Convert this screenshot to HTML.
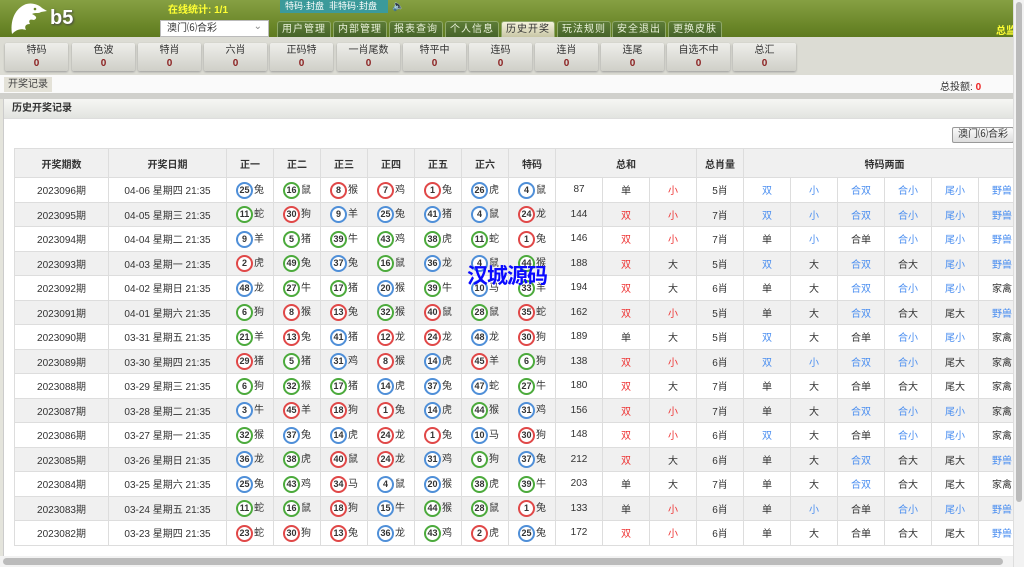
<!DOCTYPE html>
<html><head><meta charset="utf-8">
<style>
*{box-sizing:border-box;margin:0;padding:0}
body{width:1024px;height:567px;overflow:hidden;background:#e4e4dc;font-family:"Liberation Sans","Noto Sans CJK SC",sans-serif;font-size:11px;color:#333;position:relative}
#hd{position:absolute;left:0;top:0;width:1024px;height:37px;background:linear-gradient(#86a043,#6a8628 70%,#5e7a20)}
.logo{position:absolute;left:8px;top:2px}
.b5{position:absolute;left:50px;top:7px;color:#fff;font:bold 20px "Liberation Sans",sans-serif;text-shadow:1px 1px 2px #444}
.online{position:absolute;left:168px;top:1px;color:#ff3;font-weight:bold;font-size:10px}
.teal{position:absolute;left:280px;top:0;width:108px;height:13px;background:#3b9a9a;color:#fff;font-size:9px;line-height:13px;padding-left:5px;white-space:nowrap;overflow:hidden}
.spk{position:absolute;left:392px;top:1px;color:#fff;font-size:10px}
.sel{position:absolute;left:160px;top:20px;width:109px;height:17px;background:#fff;border:1px solid #bbb;font-size:10px;line-height:15px;padding-left:6px}
.sel:after{content:"⌄";position:absolute;right:6px;top:-2px;color:#888}
.tab{position:absolute;top:21px;height:16px;width:54px;background:linear-gradient(#5d7c36,#46632a);border:1px solid #8fa86a;border-bottom:none;border-radius:3px 3px 0 0;color:#e8f0d8;text-align:center;line-height:15px;font-size:10px;letter-spacing:1px}
.tab.on{background:linear-gradient(#f4f2dc,#c9c7a6);color:#333}
.zj{position:absolute;left:996px;top:22px;color:#ff3;font-weight:bold;font-size:10px}
#stat{position:absolute;top:37px;left:0;width:1024px;height:38px;background:#dcdcd4}
.sb{position:absolute;top:6px;width:63px;height:28px;background:linear-gradient(#eeeeea,#cfcfc8);border-radius:2px;box-shadow:0 1px 2px #999;text-align:center;font-size:10px;line-height:13px;padding-top:1px}
.sb b{display:block;color:#8b2020;font-size:10px}
#strip{position:absolute;top:75px;left:0;width:1013px;height:18px;background:#fafafa}
.tag{position:absolute;left:4px;top:2px;height:15px;background:#e4e2d8;padding:0 4px;font-size:10px;line-height:15px;color:#444}
.tot{position:absolute;left:940px;top:3px;font-size:10px}
.tot b{color:#e22}
#gap{position:absolute;top:93px;left:0;width:1013px;height:6px;background:#d0d0cc}
#panel{position:absolute;top:99px;left:3px;width:1010px;height:460px;background:#fff;border-left:1px solid #ccc;overflow:hidden}
.ph{height:20px;background:linear-gradient(#f6f6f4,#e2e4e0);border-bottom:1px solid #ddd;padding-left:8px;line-height:20px;font-weight:bold;font-size:10px}
.pbtn{position:absolute;left:948px;top:28px;width:62px;height:16px;background:linear-gradient(#fafafa,#ddd);border:1px solid #999;border-radius:2px;font-size:10px;line-height:14px;text-align:center}
table{position:absolute;left:10px;top:49px;border-collapse:collapse;table-layout:fixed;width:1011px}
td,th{border:1px solid #ddd;text-align:center;height:24.5px;font-size:10px;white-space:nowrap;overflow:hidden;padding:0}
th{height:29px;background:#f0f0f0;font-weight:bold}
tr:nth-child(odd) td{background:#f0f0f0}
.r{color:#e33}.b{color:#4a8ef0}
i{display:inline-block;width:17px;height:17px;border-radius:50%;border:2.5px solid;font-style:normal;font-weight:bold;font-size:9px;line-height:12px;text-align:center;color:#333;background:#fff;vertical-align:middle;margin-right:1px}
i.R{border-color:#e04848}i.B{border-color:#4f8fd8}i.G{border-color:#4caa3c}
#vs{position:absolute;left:1013px;top:0;width:11px;height:567px;background:#f2f2f2;border-left:1px solid #ddd}
#vs:after{content:"";position:absolute;left:2px;top:2px;width:6px;height:500px;background:#bbb;border-radius:3px}
#hs{position:absolute;left:0;top:556px;width:1013px;height:11px;background:#f2f2f2}
#hs:after{content:"";position:absolute;left:3px;top:2px;width:1000px;height:7px;background:#bbb;border-radius:4px}
.wm{position:absolute;left:467px;top:260px;color:#0a0aff;font:bold 21px "Noto Sans CJK SC",sans-serif;letter-spacing:-1px}
</style></head><body>
<div id="hd">
<svg class="logo" width="40" height="34" viewBox="0 0 40 34"><path d="M4 32 C2 20 6 8 16 3 C22 0 30 2 34 6 L39 9 L33 10 C30 12 28 10 24 12 C28 14 30 16 26 18 C22 17 20 18 22 22 C18 22 16 24 18 28 C12 26 8 28 4 32Z" fill="#fff"/><circle cx="27" cy="7" r="1.3" fill="#6a8628"/></svg>
<div class="b5">b5</div>
<div class="online">在线统计: 1/1</div>
<div class="teal">特码·封盘&nbsp;&nbsp;非特码·封盘</div><div class="spk">🔈</div>
<div class="sel">澳门⑹合彩</div>
<div class="tab" style="left:277px">用户管理</div>
<div class="tab" style="left:333px">内部管理</div>
<div class="tab" style="left:389px">报表查询</div>
<div class="tab" style="left:445px">个人信息</div>
<div class="tab on" style="left:501px">历史开奖</div>
<div class="tab" style="left:557px">玩法规则</div>
<div class="tab" style="left:612px">安全退出</div>
<div class="tab" style="left:668px">更换皮肤</div>
<div class="zj">总监</div>
</div>
<div id="stat">
<div class="sb" style="left:5px">特码<b>0</b></div>
<div class="sb" style="left:72px">色波<b>0</b></div>
<div class="sb" style="left:138px">特肖<b>0</b></div>
<div class="sb" style="left:204px">六肖<b>0</b></div>
<div class="sb" style="left:270px">正码特<b>0</b></div>
<div class="sb" style="left:337px">一肖尾数<b>0</b></div>
<div class="sb" style="left:403px">特平中<b>0</b></div>
<div class="sb" style="left:469px">连码<b>0</b></div>
<div class="sb" style="left:535px">连肖<b>0</b></div>
<div class="sb" style="left:601px">连尾<b>0</b></div>
<div class="sb" style="left:667px">自选不中<b>0</b></div>
<div class="sb" style="left:733px">总汇<b>0</b></div>
</div>
<div id="strip"><span class="tag">开奖记录</span><span class="tot">总投额: <b>0</b></span></div>
<div id="gap"></div>
<div id="panel">
<div class="ph">历史开奖记录</div>
<div class="pbtn">澳门⑹合彩</div>
<table>
<colgroup><col style="width:94px"><col style="width:118px"><col span="7" style="width:47px"><col span="3" style="width:47px"><col style="width:47px"><col span="6" style="width:47px"></colgroup>
<tr><th>开奖期数</th><th>开奖日期</th><th>正一</th><th>正二</th><th>正三</th><th>正四</th><th>正五</th><th>正六</th><th>特码</th><th colspan="3">总和</th><th>总肖量</th><th colspan="6">特码两面</th></tr>
<tr><td>2023096期</td><td>04-06 星期四 21:35</td><td><i class="B">25</i>兔</td><td><i class="G">16</i>鼠</td><td><i class="R">8</i>猴</td><td><i class="R">7</i>鸡</td><td><i class="R">1</i>兔</td><td><i class="B">26</i>虎</td><td><i class="B">4</i>鼠</td><td>87</td><td>单</td><td class="r">小</td><td>5肖</td><td class="b">双</td><td class="b">小</td><td class="b">合双</td><td class="b">合小</td><td class="b">尾小</td><td class="b">野兽</td></tr>
<tr><td>2023095期</td><td>04-05 星期三 21:35</td><td><i class="G">11</i>蛇</td><td><i class="R">30</i>狗</td><td><i class="B">9</i>羊</td><td><i class="B">25</i>兔</td><td><i class="B">41</i>猪</td><td><i class="B">4</i>鼠</td><td><i class="R">24</i>龙</td><td>144</td><td class="r">双</td><td class="r">小</td><td>7肖</td><td class="b">双</td><td class="b">小</td><td class="b">合双</td><td class="b">合小</td><td class="b">尾小</td><td class="b">野兽</td></tr>
<tr><td>2023094期</td><td>04-04 星期二 21:35</td><td><i class="B">9</i>羊</td><td><i class="G">5</i>猪</td><td><i class="G">39</i>牛</td><td><i class="G">43</i>鸡</td><td><i class="G">38</i>虎</td><td><i class="G">11</i>蛇</td><td><i class="R">1</i>兔</td><td>146</td><td class="r">双</td><td class="r">小</td><td>7肖</td><td>单</td><td class="b">小</td><td>合单</td><td class="b">合小</td><td class="b">尾小</td><td class="b">野兽</td></tr>
<tr><td>2023093期</td><td>04-03 星期一 21:35</td><td><i class="R">2</i>虎</td><td><i class="G">49</i>兔</td><td><i class="B">37</i>兔</td><td><i class="G">16</i>鼠</td><td><i class="B">36</i>龙</td><td><i class="B">4</i>鼠</td><td><i class="G">44</i>猴</td><td>188</td><td class="r">双</td><td>大</td><td>5肖</td><td class="b">双</td><td>大</td><td class="b">合双</td><td>合大</td><td class="b">尾小</td><td class="b">野兽</td></tr>
<tr><td>2023092期</td><td>04-02 星期日 21:35</td><td><i class="B">48</i>龙</td><td><i class="G">27</i>牛</td><td><i class="G">17</i>猪</td><td><i class="B">20</i>猴</td><td><i class="G">39</i>牛</td><td><i class="B">10</i>马</td><td><i class="G">33</i>羊</td><td>194</td><td class="r">双</td><td>大</td><td>6肖</td><td>单</td><td>大</td><td class="b">合双</td><td class="b">合小</td><td class="b">尾小</td><td>家禽</td></tr>
<tr><td>2023091期</td><td>04-01 星期六 21:35</td><td><i class="G">6</i>狗</td><td><i class="R">8</i>猴</td><td><i class="R">13</i>兔</td><td><i class="G">32</i>猴</td><td><i class="R">40</i>鼠</td><td><i class="G">28</i>鼠</td><td><i class="R">35</i>蛇</td><td>162</td><td class="r">双</td><td class="r">小</td><td>5肖</td><td>单</td><td>大</td><td class="b">合双</td><td>合大</td><td>尾大</td><td class="b">野兽</td></tr>
<tr><td>2023090期</td><td>03-31 星期五 21:35</td><td><i class="G">21</i>羊</td><td><i class="R">13</i>兔</td><td><i class="B">41</i>猪</td><td><i class="R">12</i>龙</td><td><i class="R">24</i>龙</td><td><i class="B">48</i>龙</td><td><i class="R">30</i>狗</td><td>189</td><td>单</td><td>大</td><td>5肖</td><td class="b">双</td><td>大</td><td>合单</td><td class="b">合小</td><td class="b">尾小</td><td>家禽</td></tr>
<tr><td>2023089期</td><td>03-30 星期四 21:35</td><td><i class="R">29</i>猪</td><td><i class="G">5</i>猪</td><td><i class="B">31</i>鸡</td><td><i class="R">8</i>猴</td><td><i class="B">14</i>虎</td><td><i class="R">45</i>羊</td><td><i class="G">6</i>狗</td><td>138</td><td class="r">双</td><td class="r">小</td><td>6肖</td><td class="b">双</td><td class="b">小</td><td class="b">合双</td><td class="b">合小</td><td>尾大</td><td>家禽</td></tr>
<tr><td>2023088期</td><td>03-29 星期三 21:35</td><td><i class="G">6</i>狗</td><td><i class="G">32</i>猴</td><td><i class="G">17</i>猪</td><td><i class="B">14</i>虎</td><td><i class="B">37</i>兔</td><td><i class="B">47</i>蛇</td><td><i class="G">27</i>牛</td><td>180</td><td class="r">双</td><td>大</td><td>7肖</td><td>单</td><td>大</td><td>合单</td><td>合大</td><td>尾大</td><td>家禽</td></tr>
<tr><td>2023087期</td><td>03-28 星期二 21:35</td><td><i class="B">3</i>牛</td><td><i class="R">45</i>羊</td><td><i class="R">18</i>狗</td><td><i class="R">1</i>兔</td><td><i class="B">14</i>虎</td><td><i class="G">44</i>猴</td><td><i class="B">31</i>鸡</td><td>156</td><td class="r">双</td><td class="r">小</td><td>7肖</td><td>单</td><td>大</td><td class="b">合双</td><td class="b">合小</td><td class="b">尾小</td><td>家禽</td></tr>
<tr><td>2023086期</td><td>03-27 星期一 21:35</td><td><i class="G">32</i>猴</td><td><i class="B">37</i>兔</td><td><i class="B">14</i>虎</td><td><i class="R">24</i>龙</td><td><i class="R">1</i>兔</td><td><i class="B">10</i>马</td><td><i class="R">30</i>狗</td><td>148</td><td class="r">双</td><td class="r">小</td><td>6肖</td><td class="b">双</td><td>大</td><td>合单</td><td class="b">合小</td><td class="b">尾小</td><td>家禽</td></tr>
<tr><td>2023085期</td><td>03-26 星期日 21:35</td><td><i class="B">36</i>龙</td><td><i class="G">38</i>虎</td><td><i class="R">40</i>鼠</td><td><i class="R">24</i>龙</td><td><i class="B">31</i>鸡</td><td><i class="G">6</i>狗</td><td><i class="B">37</i>兔</td><td>212</td><td class="r">双</td><td>大</td><td>6肖</td><td>单</td><td>大</td><td class="b">合双</td><td>合大</td><td>尾大</td><td class="b">野兽</td></tr>
<tr><td>2023084期</td><td>03-25 星期六 21:35</td><td><i class="B">25</i>兔</td><td><i class="G">43</i>鸡</td><td><i class="R">34</i>马</td><td><i class="B">4</i>鼠</td><td><i class="B">20</i>猴</td><td><i class="G">38</i>虎</td><td><i class="G">39</i>牛</td><td>203</td><td>单</td><td>大</td><td>7肖</td><td>单</td><td>大</td><td class="b">合双</td><td>合大</td><td>尾大</td><td>家禽</td></tr>
<tr><td>2023083期</td><td>03-24 星期五 21:35</td><td><i class="G">11</i>蛇</td><td><i class="G">16</i>鼠</td><td><i class="R">18</i>狗</td><td><i class="B">15</i>牛</td><td><i class="G">44</i>猴</td><td><i class="G">28</i>鼠</td><td><i class="R">1</i>兔</td><td>133</td><td>单</td><td class="r">小</td><td>6肖</td><td>单</td><td class="b">小</td><td>合单</td><td class="b">合小</td><td class="b">尾小</td><td class="b">野兽</td></tr>
<tr><td>2023082期</td><td>03-23 星期四 21:35</td><td><i class="R">23</i>蛇</td><td><i class="R">30</i>狗</td><td><i class="R">13</i>兔</td><td><i class="B">36</i>龙</td><td><i class="G">43</i>鸡</td><td><i class="R">2</i>虎</td><td><i class="B">25</i>兔</td><td>172</td><td class="r">双</td><td class="r">小</td><td>6肖</td><td>单</td><td>大</td><td>合单</td><td>合大</td><td>尾大</td><td class="b">野兽</td></tr>
</table>
</div>
<div class="wm">汉城源码</div>
<div id="vs"></div>
<div id="hs"></div>
</body></html>
